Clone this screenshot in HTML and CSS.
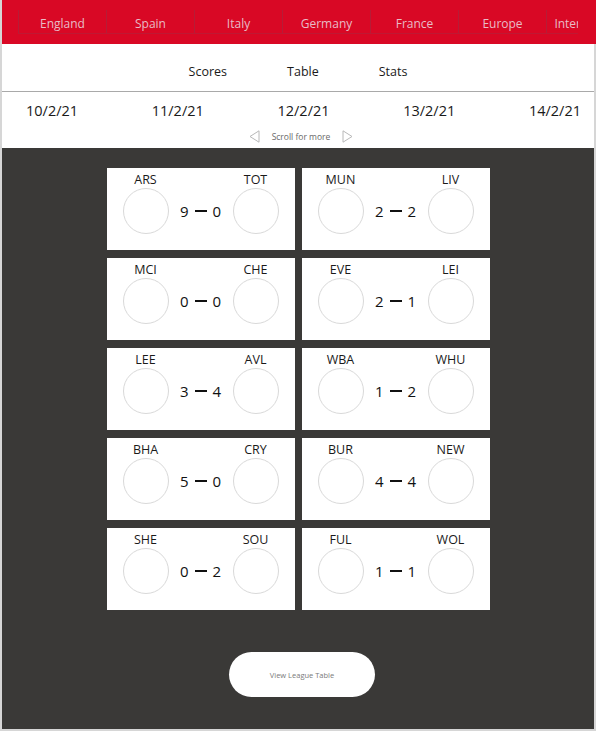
FILE: index.html
```html
<!DOCTYPE html>
<html lang="en">
<head>
<meta charset="utf-8">
<title>Scores</title>
<link rel="stylesheet" href="styles.css">
</head>
<body>
<div class="app">
  <header class="leagues">
    <nav class="league-list">
      <a class="league">England</a>
      <a class="league">Spain</a>
      <a class="league">Italy</a>
      <a class="league">Germany</a>
      <a class="league">France</a>
      <a class="league">Europe</a>
      <a class="league">International</a>
    </nav>
  </header>
  <div class="body-frame">
    <div class="tabs">
      <a class="tab">Scores</a>
      <a class="tab">Table</a>
      <a class="tab">Stats</a>
    </div>
    <div class="dates">
      <div class="date-row">
        <span class="date">10/2/21</span>
        <span class="date">11/2/21</span>
        <span class="date">12/2/21</span>
        <span class="date">13/2/21</span>
        <span class="date">14/2/21</span>
      </div>
      <div class="scroll-hint">
        <svg class="arrow" width="11" height="13" viewBox="0 0 11 13"><path d="M10 0.8 L1 6.5 L10 12.2 Z" fill="none" stroke="#b8b8b8" stroke-width="1"/></svg>
        <span class="hint-text">Scroll for more</span>
        <svg class="arrow" width="11" height="13" viewBox="0 0 11 13"><path d="M1 0.8 L10 6.5 L1 12.2 Z" fill="none" stroke="#b8b8b8" stroke-width="1"/></svg>
      </div>
    </div>
    <main class="board">
      <div class="grid">
        <div class="card"><div class="team"><span class="name">ARS</span><span class="crest"></span></div><div class="score">9<i class="dash"></i>0</div><div class="team"><span class="name">TOT</span><span class="crest"></span></div></div>
        <div class="card"><div class="team"><span class="name">MUN</span><span class="crest"></span></div><div class="score">2<i class="dash"></i>2</div><div class="team"><span class="name">LIV</span><span class="crest"></span></div></div>
        <div class="card"><div class="team"><span class="name">MCI</span><span class="crest"></span></div><div class="score">0<i class="dash"></i>0</div><div class="team"><span class="name">CHE</span><span class="crest"></span></div></div>
        <div class="card"><div class="team"><span class="name">EVE</span><span class="crest"></span></div><div class="score">2<i class="dash"></i>1</div><div class="team"><span class="name">LEI</span><span class="crest"></span></div></div>
        <div class="card"><div class="team"><span class="name">LEE</span><span class="crest"></span></div><div class="score">3<i class="dash"></i>4</div><div class="team"><span class="name">AVL</span><span class="crest"></span></div></div>
        <div class="card"><div class="team"><span class="name">WBA</span><span class="crest"></span></div><div class="score">1<i class="dash"></i>2</div><div class="team"><span class="name">WHU</span><span class="crest"></span></div></div>
        <div class="card"><div class="team"><span class="name">BHA</span><span class="crest"></span></div><div class="score">5<i class="dash"></i>0</div><div class="team"><span class="name">CRY</span><span class="crest"></span></div></div>
        <div class="card"><div class="team"><span class="name">BUR</span><span class="crest"></span></div><div class="score">4<i class="dash"></i>4</div><div class="team"><span class="name">NEW</span><span class="crest"></span></div></div>
        <div class="card"><div class="team"><span class="name">SHE</span><span class="crest"></span></div><div class="score">0<i class="dash"></i>2</div><div class="team"><span class="name">SOU</span><span class="crest"></span></div></div>
        <div class="card"><div class="team"><span class="name">FUL</span><span class="crest"></span></div><div class="score">1<i class="dash"></i>1</div><div class="team"><span class="name">WOL</span><span class="crest"></span></div></div>
      </div>
      <button class="league-button">View League Table</button>
    </main>
  </div>
</div>
</body>
</html>
```

FILE: styles.css
```css
* { box-sizing: border-box; }

html, body {
  margin: 0;
  padding: 0;
  background: #ffffff;
}

body {
  font-family: "Open Sans", "Noto Sans", sans-serif;
  color: #1a1a1a;
}

.app {
  width: 596px;
  height: 731px;
  display: flex;
  flex-direction: column;
  border-left: 2px solid #d6d6d6;
  border-bottom: 2px solid #d6d6d6;
}

.leagues {
  height: 44px;
  flex: none;
  background: #d90825;
  padding: 10px 18px 0 16px;
}

.league-list {
  display: flex;
  overflow: hidden;
  height: 24px;
  border-bottom: 1px solid #c01833;
}

.league {
  flex: none;
  width: 88px;
  height: 23px;
  padding-top: 3px;
  border-left: 1px solid #b71c36;
  display: flex;
  align-items: center;
  justify-content: center;
  font-size: 12px;
  color: #e8bcc5;
  white-space: nowrap;
}

.body-frame {
  flex: 1;
  display: flex;
  flex-direction: column;
  border-right: 2px solid #d6d6d6;
}

.tabs {
  height: 48px;
  flex: none;
  display: flex;
  justify-content: center;
  align-items: center;
  gap: 60px;
  padding-left: 0;
  padding-top: 8px;
  border-bottom: 1px solid #a9a9a9;
}

.tab {
  font-size: 12.5px;
  color: #1a1a1a;
}

.dates {
  height: 56px;
  flex: none;
  padding-top: 8px;
}

.date-row {
  display: flex;
  justify-content: space-between;
  padding: 0 13px 0 24px;
  height: 20px;
  align-items: center;
}

.date {
  font-size: 14.5px;
  color: #1a1a1a;
}

.scroll-hint {
  margin-top: 9px;
  display: flex;
  justify-content: center;
  align-items: center;
  gap: 12px;
  height: 14px;
  padding-left: 6px;
}

.arrow { display: block; }

.hint-text {
  font-size: 8.5px;
  color: #6a6a6a;
}

.board {
  flex: 1;
  background: #3a3937;
  display: flex;
  flex-direction: column;
  align-items: center;
  padding-top: 20px;
}

.grid {
  display: grid;
  grid-template-columns: 188px 188px;
  grid-auto-rows: 82px;
  column-gap: 7px;
  row-gap: 8px;
}

.card {
  background: #ffffff;
  display: flex;
  justify-content: space-between;
  align-items: flex-end;
  padding: 4px 16px 16px 16px;
}

.team {
  width: 46px;
  display: flex;
  flex-direction: column;
  align-items: center;
}

.name {
  font-size: 12.5px;
  line-height: 16px;
  color: #1a1a1a;
}

.crest {
  width: 46px;
  height: 46px;
  border-radius: 50%;
  border: 1px solid #d9d9d9;
}

.score {
  height: 46px;
  display: flex;
  align-items: center;
  font-size: 15px;
  color: #111111;
  gap: 6px;
}

.dash {
  display: block;
  width: 12px;
  height: 2px;
  background: #111111;
}

.league-button {
  margin-top: 42px;
  margin-left: 8px;
  width: 146px;
  height: 45px;
  border: none;
  border-radius: 23px;
  background: #ffffff;
  font-family: "Open Sans", "Noto Sans", sans-serif;
  font-size: 7.5px;
  color: #7a7a7a;
  padding: 0;
}
```
